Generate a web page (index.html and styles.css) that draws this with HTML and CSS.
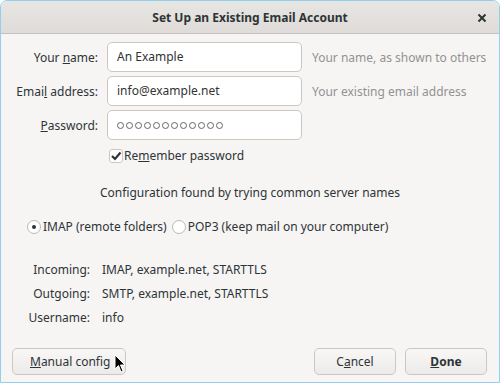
FILE: index.html
```html
<!DOCTYPE html>
<html lang="en">
<head>
    <meta charset="UTF-8">
    <title>Set Up an Existing Email Account</title>
    <link rel="stylesheet" href="styles.css">
</head>
<body>
    <div class="window">
        <div class="titlebar">
            <span class="title">Set Up an Existing Email Account</span>
            <svg class="close" width="10" height="10" viewBox="0 0 10 10">
                <path d="M1.5 1.5 L8.5 8.5 M8.5 1.5 L1.5 8.5" stroke="#2e3436" stroke-width="2"/>
            </svg>
        </div>

        <div class="content">
            <div class="form">
                <label class="label">Your <u>n</u>ame:</label>
                <div class="input">An Example</div>
                <span class="hint">Your name, as shown to others</span>

                <label class="label">Emai<u>l</u> address:</label>
                <div class="input">info@example.net</div>
                <span class="hint">Your existing email address</span>

                <label class="label"><u>P</u>assword:</label>
                <div class="input dots">
                    <i></i><i></i><i></i><i></i><i></i><i></i>
                    <i></i><i></i><i></i><i></i><i></i><i></i>
                </div>
                <span></span>

                <span></span>
                <div class="check">
                    <span class="box">
                        <svg width="12" height="12" viewBox="0 0 12 12">
                            <path d="M2 6 L5 9 L10.5 2.5" fill="none" stroke="#2e3436" stroke-width="2.2"/>
                        </svg>
                    </span>Re<u>m</u>ember password
                </div>
            </div>

            <p class="found">Configuration found by trying common server names</p>

            <div class="radios">
                <span class="radio on"></span>IMAP (remote folders)
                <span class="radio second"></span>POP3 (keep mail on your computer)
            </div>

            <div class="servers">
                <span class="slabel">Incoming:</span><span>IMAP, example.net, STARTTLS</span>
                <span class="slabel">Outgoing:</span><span>SMTP, example.net, STARTTLS</span>
                <span class="slabel">Username:</span><span>info</span>
            </div>

            <div class="buttons">
                <button class="btn manual"><u>M</u>anual config
                    <svg class="cursor" width="12" height="20" viewBox="0 0 12 20">
                        <path d="M1 1 L1 15 L4.5 11.5 L7 18 L9 17 L6.5 11 L11 11 Z" fill="#000" stroke="#fff" stroke-width="1"/>
                    </svg>
                </button>
                <span class="spacer"></span>
                <button class="btn">C<u>a</u>ncel</button>
                <button class="btn done"><u>D</u>one</button>
            </div>
        </div>
    </div>
</body>
</html>
```

FILE: styles.css
```css
*{
    padding: 0;
    margin: 0;
    box-sizing: border-box;
}
body{
    width: 500px;
    height: 383px;
    background: #fff;
    font-family: "Noto Sans", sans-serif;
    font-size: 12px;
    color: #2e3436;
}
.window{
    width: 500px;
    height: 383px;
    border: 1px solid #8fd0ef;
    border-radius: 7px 7px 0 0;
    overflow: hidden;
    display: flex;
    flex-direction: column;
    background: #f6f5f4;
}

/* 标题栏 */
.titlebar{
    height: 33px;
    flex-shrink: 0;
    background: linear-gradient(#e8e6e3, #dedbd8);
    border-bottom: 1px solid #c5c0bb;
    display: flex;
    align-items: center;
    justify-content: center;
    position: relative;
}
.title{
    font-weight: bold;
    font-size: 12px;
    color: #2e3436;
}
.close{
    position: absolute;
    right: 12px;
    top: 12px;
}

.content{
    flex: 1;
    display: flex;
    flex-direction: column;
}

/* 表单 */
.form{
    display: grid;
    grid-template-columns: 97px 195px auto;
    column-gap: 9px;
    row-gap: 4px;
    align-items: center;
    padding-top: 8px;
}
.label{
    text-align: right;
}
.input{
    height: 30px;
    background: #fff;
    border: 1px solid #cdc7c2;
    border-radius: 5px;
    padding-left: 9px;
    line-height: 28px;
    color: #333;
}
.dots{
    display: flex;
    align-items: center;
    gap: 2px;
}
.dots i{
    width: 7px;
    height: 7px;
    border: 1px solid #666;
    border-radius: 50%;
}
.hint{
    color: #929292;
    margin-left: 1px;
    white-space: nowrap;
}
.check{
    grid-column: 2 / 4;
    display: flex;
    align-items: center;
    margin-top: 3px;
    margin-left: 2px;
}
.box{
    width: 14px;
    height: 14px;
    border: 1px solid #cdc7c2;
    border-radius: 3px;
    background: #fff;
    display: flex;
    align-items: center;
    justify-content: center;
    margin-right: 1px;
}

.found{
    text-align: center;
    margin-top: 20px;
}

.radios{
    display: flex;
    align-items: center;
    margin-top: 17px;
    padding-left: 26px;
}
.radio{
    width: 14px;
    height: 14px;
    border: 1px solid #bdb8b3;
    border-radius: 50%;
    background: #fff;
    margin-right: 2px;
    position: relative;
}
.radio.on::after{
    content: "";
    position: absolute;
    left: 4px;
    top: 4px;
    width: 4px;
    height: 4px;
    border-radius: 50%;
    background: #2e3436;
}
.radio.second{
    margin-left: 5px;
}

.servers{
    display: grid;
    grid-template-columns: 89px auto;
    column-gap: 12px;
    row-gap: 6px;
    margin-top: 26px;
    line-height: 18px;
}
.slabel{
    text-align: right;
}

/* 按钮 */
.buttons{
    display: flex;
    align-items: center;
    margin-top: auto;
    padding: 0 12px 7px 11px;
    gap: 9px;
}
.spacer{
    flex: 1;
}
.btn{
    height: 27px;
    border: 1px solid #cdc7c2;
    border-radius: 5px;
    background: linear-gradient(#f8f7f6, #edebe9);
    font-family: inherit;
    font-size: 12px;
    color: #2e3436;
    width: 82px;
}
.manual{
    width: 114px;
    position: relative;
    text-align: left;
    padding-left: 17px;
}
.done{
    font-weight: bold;
}
.cursor{
    position: absolute;
    left: 101px;
    top: 5px;
}
```
